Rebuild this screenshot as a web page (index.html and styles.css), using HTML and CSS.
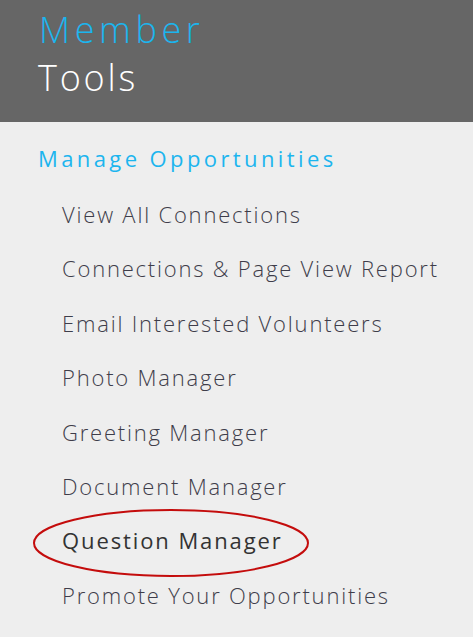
FILE: index.html
```html
<!DOCTYPE html>
<html>
<head>
<meta charset="utf-8">
<link rel="stylesheet" href="styles.css">
</head>
<body>
<div class="panel">
  <header class="panel-head">
    <div class="title-accent">Member</div>
    <div class="title-main">Tools</div>
  </header>
  <section class="menu">
    <h2 class="menu-heading">Manage Opportunities</h2>
    <ul class="menu-list">
      <li class="menu-item">View All Connections</li>
      <li class="menu-item">Connections &amp; Page View Report</li>
      <li class="menu-item">Email Interested Volunteers</li>
      <li class="menu-item">Photo Manager</li>
      <li class="menu-item">Greeting Manager</li>
      <li class="menu-item">Document Manager</li>
      <li class="menu-item menu-item-active">Question Manager
        <svg class="circle-mark" width="280" height="72" viewBox="0 0 280 72"><ellipse cx="139" cy="35" rx="137" ry="33" fill="none" stroke="#c40c0c" stroke-width="2"/></svg>
      </li>
      <li class="menu-item">Promote Your Opportunities</li>
    </ul>
  </section>
</div>
</body>
</html>
```

FILE: styles.css
```css
html, body {
  margin: 0;
  padding: 0;
  background: #eeeeee;
}
body {
  width: 473px;
  height: 637px;
  overflow: hidden;
  font-family: "Open Sans", "Liberation Sans", sans-serif;
}
.panel {
  background: #eeeeee;
  min-height: 637px;
}
.panel-head {
  background: #666666;
  height: 122px;
  box-sizing: border-box;
  padding: 6px 0 0 38px;
  font-size: 36px;
  font-weight: 300;
  line-height: 48px;
}
.title-accent {
  color: #1cb5ee;
  letter-spacing: 4.6px;
  padding-left: 1px;
}
.title-main {
  color: #ffffff;
  letter-spacing: 2.8px;
}
.menu {
  padding-top: 21px;
}
.menu-heading {
  margin: 0;
  padding-left: 38px;
  font-size: 22px;
  font-weight: 400;
  line-height: 30px;
  letter-spacing: 3.4px;
  color: #1cb5ee;
}
.menu-list {
  list-style: none;
  margin: 14px 0 0;
  padding: 0;
}
.menu-item {
  position: relative;
  padding-left: 62px;
  font-size: 22px;
  font-weight: 300;
  line-height: 54.4px;
  letter-spacing: 1.8px;
  color: #3e3d4a;
}
.menu-item-active {
  font-weight: 500;
  color: #333333;
  letter-spacing: 1.9px;
}
.circle-mark {
  position: absolute;
  left: 32px;
  top: -5px;
}
```
